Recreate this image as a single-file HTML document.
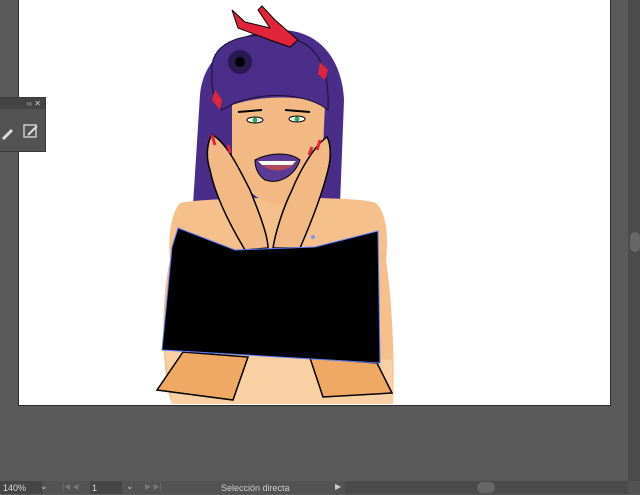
<!DOCTYPE html>
<html><head><meta charset="utf-8"><style>
html,body{margin:0;padding:0}
body{width:640px;height:494px;background:#5a5a5a;position:relative;overflow:hidden;font-family:"Liberation Sans",sans-serif}
.art{position:absolute;left:18px;top:-1px;width:591px;height:405px;background:#fff;border:1px solid #2c2c2c}
.vs{position:absolute;left:628px;top:0;width:12px;height:481px;background:#4b4b4b}
.bar{position:absolute;left:0;top:481px;width:640px;height:13px;background:#535353;font-size:9px;color:#ddd}
.panel{position:absolute;left:0;top:97px;width:45px;height:53px;background:#535353;border:1px solid #3a3a3a;border-left:none}
.ph{height:11px;background:#444;color:#ccc;font-size:8px;text-align:right;padding-right:4px;line-height:11px}
</style></head><body>
<div class="art"></div>
<svg style="position:absolute;left:0;top:0" width="640" height="494">
<!-- hair back -->
<path d="M200,95 C203,55 240,30 280,30 C320,30 342,60 344,100 L340,205 L193,205 Z" fill="#4a2d88"/>
<!-- body -->
<path d="M180,203 C200,197 360,195 376,203 C388,215 388,240 386,260 C392,300 395,360 393,404 L172,404 C162,380 160,300 170,260 C168,240 170,215 180,203 Z" fill="#f6c08c"/>
<path d="M165,350 L392,360 L393,404 L172,404 Z" fill="#f9cfa4"/>
<polygon points="157,390 183,352 248,357 233,400" fill="#f0a964" stroke="#000" stroke-width="1.5"/>
<polygon points="310,358 377,363 392,393 323,397" fill="#f0a964" stroke="#000" stroke-width="1.5"/>
<!-- face -->
<path d="M232,105 C260,95 305,95 325,105 L322,170 C310,195 290,205 275,205 C255,200 240,185 232,165 Z" fill="#f3b985"/>
<!-- hair top -->
<path d="M212,70 C210,40 250,30 285,38 C315,40 330,65 328,110 C310,95 270,90 235,103 L222,110 C210,95 212,80 212,70 Z" fill="#4b2d8a" stroke="#1a1030" stroke-width="1"/>
<circle cx="240" cy="62" r="12" fill="#2a1850"/><circle cx="240" cy="62" r="5" fill="#000"/>
<!-- ribbon -->
<path d="M232,10 L238,28 L270,40 L290,47 L298,40 L275,20 L262,6 L258,10 L270,28 L245,22 Z" fill="#e0253a" stroke="#000" stroke-width="1"/>
<path d="M320,62 L328,70 L325,80 L318,74 Z M215,90 L222,100 L220,110 L212,100 Z" fill="#e0253a"/>
<!-- eyes/brows -->
<path d="M238,112 L262,110 M285,110 L310,112" stroke="#000" stroke-width="2"/>
<ellipse cx="255" cy="120" rx="8" ry="3" fill="#fff" stroke="#000"/><circle cx="255" cy="120" r="2.5" fill="#2daa4a"/>
<ellipse cx="297" cy="119" rx="8" ry="3" fill="#fff" stroke="#000"/><circle cx="297" cy="119" r="2.5" fill="#2daa4a"/>
<!-- mouth -->
<path d="M255,160 C270,152 290,152 300,160 C295,175 280,185 265,180 C258,175 255,168 255,160 Z" fill="#5a3a95" stroke="#000"/>
<path d="M260,163 C270,160 285,160 295,163 C288,172 270,174 260,163 Z" fill="#b04a5a"/>
<path d="M258,161 L296,161 L292,165 L262,165 Z" fill="#fff"/>
<!-- hands -->
<path d="M212,135 C225,140 240,170 250,190 C258,210 268,235 268,248 L245,250 C230,225 215,195 210,170 C205,155 208,140 212,135 Z" fill="#f3b985" stroke="#000" stroke-width="1.5"/>
<path d="M327,137 C315,145 300,170 292,190 C282,210 275,235 273,248 L300,248 C310,225 322,195 328,170 C332,155 330,142 327,137 Z" fill="#f3b985" stroke="#000" stroke-width="1.5"/>
<path d="M212,135 l3,10 M320,140 l-3,10 M228,145 l2,8 M312,147 l-3,8" stroke="#e0253a" stroke-width="3"/>
<!-- black box -->
<polygon points="178,228 235,250 315,247 378,231 380,363 162,350 172,247" fill="#000" stroke="#5b7bff" stroke-width="1"/>
<circle cx="313" cy="237" r="2" fill="#7a9aff"/>
</svg>
<div class="vs"><div style="position:absolute;left:2px;top:232px;width:10px;height:20px;background:#666;border-radius:5px"></div></div>
<div class="panel"><div class="ph">‹‹ ✕</div>
<svg width="45" height="40"><path d="M3,30 L12,21" stroke="#ddd" stroke-width="3"/><rect x="24" y="16" width="12" height="12" fill="none" stroke="#ccc" stroke-width="1.5"/><path d="M28,26 L37,17" stroke="#ddd" stroke-width="2"/></svg></div>
<div class="bar">
<div style="position:absolute;left:0;top:0;width:39px;height:13px;background:#454545;padding-left:3px;line-height:14px">140%</div>
<div style="position:absolute;left:40px;top:0;color:#ccc">⌄</div>
<div style="position:absolute;left:62px;top:1px;color:#777;font-size:8px">|◀ ◀</div>
<div style="position:absolute;left:90px;top:0;width:30px;height:13px;background:#454545;line-height:14px;padding-left:2px">1</div>
<div style="position:absolute;left:126px;top:0;color:#ccc">⌄</div>
<div style="position:absolute;left:145px;top:1px;color:#777;font-size:8px">▶ ▶|</div>
<div style="position:absolute;left:221px;top:0;line-height:14px;color:#ccc">Selección directa</div>
<div style="position:absolute;left:335px;top:1px;font-size:8px;color:#ccc">▶</div>
<div style="position:absolute;left:345px;top:0;width:283px;height:13px;background:#4a4a4a"></div>
<div style="position:absolute;left:477px;top:1px;width:18px;height:11px;background:#666;border-radius:6px"></div>
</div>
</body></html>
